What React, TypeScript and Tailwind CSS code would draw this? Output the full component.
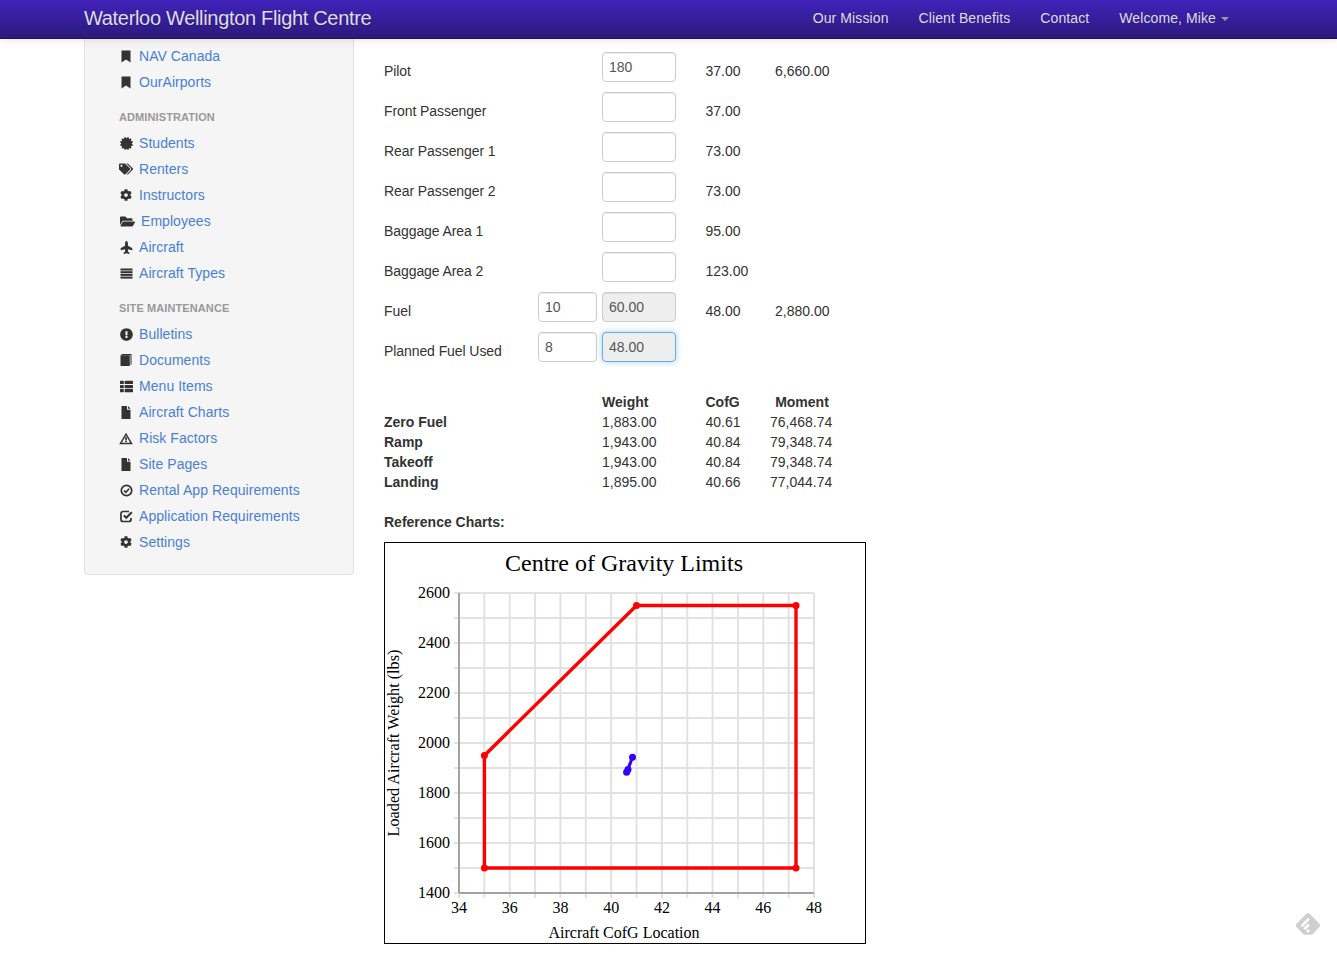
import type { ReactNode } from "react"
import {
  FaCertificate,
  FaTags,
  FaCog,
  FaFolderOpen,
  FaPlane,
  FaExclamationCircle,
  FaThList,
} from "react-icons/fa"
import { SiFeedly } from "react-icons/si"

type NavItem = { name: string; icon: ReactNode; wide?: boolean }

const ic = "text-[13px] text-[#333]"

const Bookmark = () => (
  <svg width="10" height="13" viewBox="0 0 10 13" fill="#333">
    <path d="M0.5 0.5h9v12L5 9.5l-4.5 3z" />
  </svg>
)

const Bars = () => (
  <svg width="13" height="11" viewBox="0 0 13 11" fill="#333">
    <rect x="0.5" y="0.5" width="12" height="2" />
    <rect x="0.5" y="3.2" width="12" height="2" />
    <rect x="0.5" y="5.9" width="12" height="2" />
    <rect x="0.5" y="8.6" width="12" height="2" />
  </svg>
)

const Book = () => (
  <svg width="12" height="12" viewBox="0 0 12 12" fill="#333">
    <path d="M0.5 1.2h9.3V12H0.5z" />
    <path d="M1.5 0h10v10.8h-1V1H1.5z" />
  </svg>
)

const DocFile = () => (
  <svg width="10" height="13" viewBox="0 0 10 13" fill="#333">
    <path d="M0.5 0h5.5v3.8h3.5V13H0.5z" />
    <path d="M7 0l2.5 2.8H7z" />
  </svg>
)

const Warning = () => (
  <svg width="15" height="13" viewBox="0 0 15 13" fill="#333">
    <path
      fillRule="evenodd"
      d="M7.5 0.3L14.8 12.7H0.2zM7.5 3.4L3 11H12z"
    />
    <rect x="6.6" y="5" width="1.8" height="3.2" />
    <rect x="6.6" y="8.7" width="1.8" height="1.7" />
  </svg>
)

const CheckCircle = () => (
  <svg width="13" height="13" viewBox="0 0 13 13" fill="none" stroke="#333">
    <circle cx="6.5" cy="6.5" r="5.2" strokeWidth="1.7" />
    <path d="M4 6.6l1.8 1.8 3.3-3.6" strokeWidth="1.6" />
  </svg>
)

const CheckSquare = () => (
  <svg width="13" height="13" viewBox="0 0 13 13" fill="none" stroke="#333">
    <path
      d="M9 1.5H3a2 2 0 0 0-2 2v6a2 2 0 0 0 2 2h6a2 2 0 0 0 2-2V8"
      strokeWidth="1.7"
    />
    <path d="M3.8 5.4l2.4 2.4 5.6-5.6" strokeWidth="2" />
  </svg>
)

const topLinks: NavItem[] = [
  { name: "NAV Canada", icon: <Bookmark /> },
  { name: "OurAirports", icon: <Bookmark /> },
]

const adminLinks: NavItem[] = [
  { name: "Students", icon: <FaCertificate className={ic} /> },
  { name: "Renters", icon: <FaTags className="text-[14px] text-[#333]" /> },
  { name: "Instructors", icon: <FaCog className="text-[12px] text-[#333]" /> },
  { name: "Employees", icon: <FaFolderOpen className="text-[15px] text-[#333]" />, wide: true },
  { name: "Aircraft", icon: <FaPlane className="text-[13px] text-[#333] -rotate-90" /> },
  { name: "Aircraft Types", icon: <Bars /> },
]

const siteLinks: NavItem[] = [
  { name: "Bulletins", icon: <FaExclamationCircle className={ic} /> },
  { name: "Documents", icon: <Book /> },
  { name: "Menu Items", icon: <FaThList className={ic} /> },
  { name: "Aircraft Charts", icon: <DocFile /> },
  { name: "Risk Factors", icon: <Warning /> },
  { name: "Site Pages", icon: <DocFile /> },
  { name: "Rental App Requirements", icon: <CheckCircle /> },
  { name: "Application Requirements", icon: <CheckSquare /> },
  { name: "Settings", icon: <FaCog className="text-[12px] text-[#333]" /> },
]

const loadRows = [
  { label: "Pilot", weight: "180", arm: "37.00", moment: "6,660.00" },
  { label: "Front Passenger", weight: "", arm: "37.00", moment: "" },
  { label: "Rear Passenger 1", weight: "", arm: "73.00", moment: "" },
  { label: "Rear Passenger 2", weight: "", arm: "73.00", moment: "" },
  { label: "Baggage Area 1", weight: "", arm: "95.00", moment: "" },
  { label: "Baggage Area 2", weight: "", arm: "123.00", moment: "" },
]

const results = [
  ["Zero Fuel", "1,883.00", "40.61", "76,468.74"],
  ["Ramp", "1,943.00", "40.84", "79,348.74"],
  ["Takeoff", "1,943.00", "40.84", "79,348.74"],
  ["Landing", "1,895.00", "40.66", "77,044.74"],
]

function SideRow({ item }: { item: NavItem }) {
  return (
    <a href="#" className="flex h-[26px] items-center text-[14px] tracking-[0.05px] text-[#4a80d4]">
      <span className={`flex shrink-0 items-center justify-center pr-[6px] ${item.wide ? "w-[22px]" : "w-[20px]"}`}>
        {item.icon}
      </span>
      {item.name}
    </a>
  )
}

function SideHeader({ children }: { children: ReactNode }) {
  return (
    <div className="mt-[9px] flex h-[26px] items-center text-[11px] font-bold uppercase tracking-[0.1px] text-[#999]">
      {children}
    </div>
  )
}

function Field({ value, width, shade, focus }: { value: string; width: string; shade?: boolean; focus?: boolean }) {
  return (
    <input
      readOnly
      value={value}
      className={`h-[30px] rounded-[4px] border px-[6px] text-[14px] text-[#555] outline-none ${width} ${
        shade ? "bg-[#eee]" : "bg-white"
      } ${
        focus
          ? "border-[#66afe9] shadow-[0_0_6px_rgba(102,175,233,0.6)]"
          : "border-[#ccc] shadow-[inset_0_1px_1px_rgba(0,0,0,0.075)]"
      }`}
    />
  )
}

function LoadRow({ label, small, main, arm, moment, shade, focus }: {
  label: string
  small?: string
  main: string
  arm?: string
  moment?: string
  shade?: boolean
  focus?: boolean
}) {
  return (
    <div className="grid h-[40px] grid-cols-[154px_64px_103.5px_69.5px_auto]">
      <div className="pt-[9px] tracking-[-0.08px]">{label}</div>
      <div>{small !== undefined && <Field value={small} width="w-[59px]" />}</div>
      <div>
        <Field value={main} width="w-[74px]" shade={shade} focus={focus} />
      </div>
      <div className="pt-[9px]">{arm}</div>
      <div className="pt-[9px]">{moment}</div>
    </div>
  )
}

function CgChart() {
  const xs = Array.from({ length: 15 }, (_, i) => 459 + i * 25.36)
  const ys = Array.from({ length: 13 }, (_, i) => 593 + i * 25)
  const serif = "'Liberation Serif', serif"
  return (
    <svg width="480" height="400" viewBox="385 543 480 400" className="block">
      <g stroke="#e2e2e2" strokeWidth="2">
        {xs.map((x) => (
          <line key={x} x1={x} x2={x} y1="593" y2="898" />
        ))}
        {ys.map((y) => (
          <line key={y} x1="454" x2="814" y1={y} y2={y} />
        ))}
      </g>
      <line x1="459" x2="459" y1="593" y2="893" stroke="#a3a3a3" strokeWidth="2" />
      <line x1="459" x2="814" y1="893" y2="893" stroke="#a3a3a3" strokeWidth="2" />
      <polygon
        points="484.4,755.5 636.5,605.5 796,605.5 796,868 484.4,868"
        fill="none"
        stroke="#ff0000"
        strokeWidth="3.4"
      />
      {[[484.4, 755.5], [636.5, 605.5], [796, 605.5], [796, 868], [484.4, 868]].map(([x, y]) => (
        <circle key={`${x}-${y}`} cx={x} cy={y} r="3.5" fill="#ff0000" />
      ))}
      <polyline points="626.6,772.2 632.5,757.2 628,769.5" fill="none" stroke="#3300ff" strokeWidth="3" />
      {[[626.6, 772.2], [632.5, 757.2], [628, 769.5]].map(([x, y]) => (
        <circle key={`${x}-${y}`} cx={x} cy={y} r="3.5" fill="#3300ff" />
      ))}
      <text x="624" y="571" textAnchor="middle" fontSize="24" fontFamily={serif} fill="#000">
        Centre of Gravity Limits
      </text>
      {["2600", "2400", "2200", "2000", "1800", "1600", "1400"].map((t, i) => (
        <text key={t} x="450" y={598 + i * 50} textAnchor="end" fontSize="16" fontFamily={serif} fill="#000">
          {t}
        </text>
      ))}
      {["34", "36", "38", "40", "42", "44", "46", "48"].map((t, i) => (
        <text key={t} x={459 + i * 50.72} y="913" textAnchor="middle" fontSize="16" fontFamily={serif} fill="#000">
          {t}
        </text>
      ))}
      <text x="624" y="938" textAnchor="middle" fontSize="16" fontFamily={serif} fill="#000">
        Aircraft CofG Location
      </text>
      <text
        transform="translate(399 743) rotate(-90)"
        textAnchor="middle"
        fontSize="16.2"
        fontFamily={serif}
        fill="#000"
      >
        Loaded Aircraft Weight (lbs)
      </text>
    </svg>
  )
}

export default function App() {
  return (
    <div className="relative min-h-screen overflow-hidden bg-white font-['Liberation_Sans',sans-serif] text-[14px] leading-[20px] text-[#333]">
      <header className="relative z-10 flex h-[39px] items-center justify-between border-b border-[#1d1450] bg-gradient-to-b from-[#4022ba] to-[#2c1a7c] pb-[2px] pl-[84px] pr-[108px] shadow-[0_1px_10px_rgba(0,0,0,0.1)]">
        <a href="#" className="text-[20px] tracking-[-0.32px] text-[#dddddd] [text-shadow:0_1px_0_rgba(0,0,0,0.2)]">
          Waterloo Wellington Flight Centre
        </a>
        <nav className="flex items-center gap-[30px] text-[14px] font-medium tracking-[0.1px] text-[#dddddd]">
          <a href="#">Our Mission</a>
          <a href="#">Client Benefits</a>
          <a href="#">Contact</a>
          <a href="#" className="flex items-center">
            Welcome, Mike
            <span className="ml-[5px] mt-[1px] h-0 w-0 border-x-[4px] border-t-[4px] border-x-transparent border-t-[#999]" />
          </a>
        </nav>
      </header>

      <div className="flex items-start gap-[30px] pl-[84px] pb-[10px]">
        <aside className="w-[270px] shrink-0 rounded-b-[4px] border border-t-0 border-[#e3e3e3] bg-[#f5f5f5] pb-[19px] pl-[34px] pt-[4px]">
          {topLinks.map((item) => (
            <SideRow key={item.name} item={item} />
          ))}
          <SideHeader>Administration</SideHeader>
          {adminLinks.map((item) => (
            <SideRow key={item.name} item={item} />
          ))}
          <SideHeader>Site Maintenance</SideHeader>
          {siteLinks.map((item) => (
            <SideRow key={item.name} item={item} />
          ))}
        </aside>

        <main className="pt-[13px]">
          {loadRows.map((r) => (
            <LoadRow key={r.label} label={r.label} main={r.weight} arm={r.arm} moment={r.moment} />
          ))}
          <LoadRow label="Fuel" small="10" main="60.00" arm="48.00" moment="2,880.00" shade />
          <LoadRow label="Planned Fuel Used" small="8" main="48.00" shade focus />

          <div className="mt-[20px] grid grid-cols-[218px_103.5px_64.5px_62px]">
            <div />
            <div className="font-bold">Weight</div>
            <div className="font-bold">CofG</div>
            <div className="pl-[2px] text-center font-bold">Moment</div>
            {results.map((row) => (
              <div key={row[0]} className="contents">
                <div className="font-bold">{row[0]}</div>
                <div>{row[1]}</div>
                <div>{row[2]}</div>
                <div className="text-center">{row[3]}</div>
              </div>
            ))}
          </div>

          <div className="mb-[10px] mt-[20px] font-bold">Reference Charts:</div>
          <div className="w-[482px] border border-black">
            <CgChart />
          </div>
        </main>
      </div>

      <SiFeedly className="absolute bottom-[18px] right-[17px] text-[24px] text-[#cfcfcf]" />
    </div>
  )
}
